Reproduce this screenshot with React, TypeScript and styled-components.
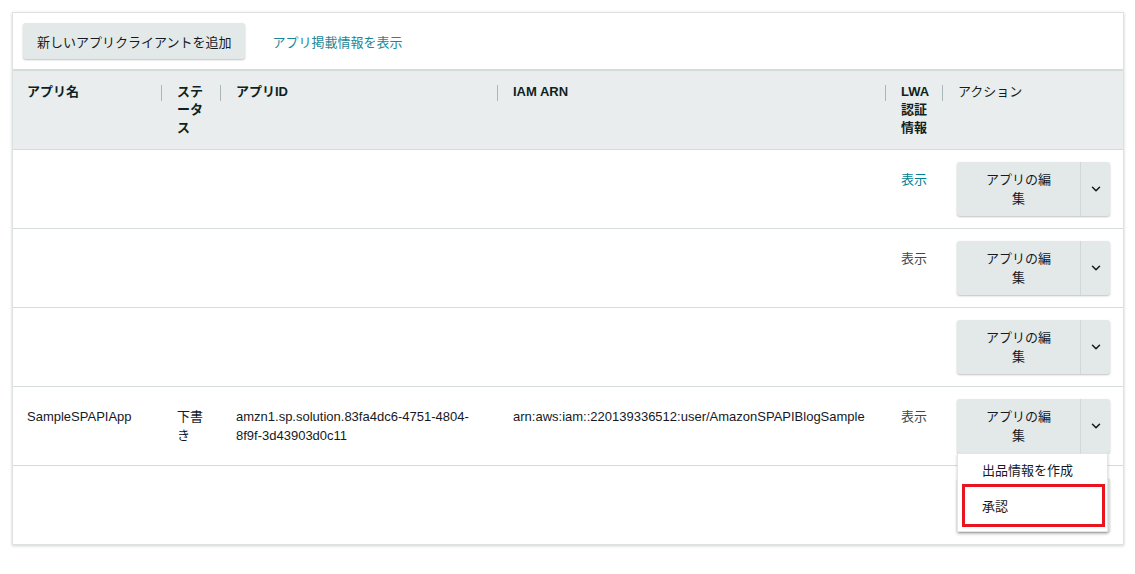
import { ChevronDown } from "lucide-react";
import styled, { createGlobalStyle } from "styled-components";

const GlobalStyle = createGlobalStyle`
  html, body {
    margin: 0;
    padding: 0;
    background: #ffffff;
  }
  body {
    font-family: "Liberation Sans", "Noto Sans CJK JP", sans-serif;
    font-size: 13px;
    color: #16191f;
  }
`;

const columns = "148px 59px 277px 388px 57px 1fr";

type AppRow = {
  name?: string;
  status?: string;
  appId?: string;
  arn?: string;
  showLink?: "link" | "plain" | "none";
  menuOpen?: boolean;
};

const rows: AppRow[] = [
  { showLink: "link" },
  { showLink: "plain" },
  { showLink: "none" },
  {
    name: "SampleSPAPIApp",
    status: "下書き",
    appId: "amzn1.sp.solution.83fa4dc6-4751-4804-8f9f-3d43903d0c11",
    arn: "arn:aws:iam::220139336512:user/AmazonSPAPIBlogSample",
    showLink: "plain",
    menuOpen: true,
  },
  { showLink: "none" },
];

const headers: { label: string; light?: boolean }[] = [
  { label: "アプリ名" },
  { label: "ステータス" },
  { label: "アプリID" },
  { label: "IAM ARN" },
  { label: "LWA認証情報" },
  { label: "アクション", light: true },
];

export default function App() {
  return (
    <>
      <GlobalStyle />
      <Page>
        <Card>
          <Toolbar>
            <PrimaryButton>新しいアプリクライアントを追加</PrimaryButton>
            <ToolbarLink>アプリ掲載情報を表示</ToolbarLink>
          </Toolbar>

          <HeaderRow>
            {headers.map((h, i) => (
              <HeaderCell key={h.label} $divider={i > 0} $light={h.light}>
                {h.label}
              </HeaderCell>
            ))}
          </HeaderRow>

          {rows.map((row, i) => (
            <BodyRow key={i} $last={i === rows.length - 1}>
              <Cell>{row.name}</Cell>
              <Cell>{row.status}</Cell>
              <Cell>{row.appId}</Cell>
              <Cell>{row.arn}</Cell>
              <Cell>
                {row.showLink !== "none" && (
                  <ShowLink $teal={row.showLink === "link"}>表示</ShowLink>
                )}
              </Cell>
              <ActionCell>
                <SplitButton>
                  <SplitMain>アプリの編集</SplitMain>
                  <SplitCaret>
                    <ChevronDown size={14} strokeWidth={2.6} />
                  </SplitCaret>
                  {row.menuOpen && (
                    <Menu>
                      <MenuItem>出品情報を作成</MenuItem>
                      <HighlightedItem>承認</HighlightedItem>
                    </Menu>
                  )}
                </SplitButton>
              </ActionCell>
            </BodyRow>
          ))}
        </Card>
      </Page>
    </>
  );
}

const Page = styled.div`
  padding: 12px 11px 12px 12px;
`;

const Card = styled.div`
  background: #ffffff;
  border: 1px solid #dde1e1;
  box-shadow: 0 1px 3px rgba(0, 0, 0, 0.18);
  box-sizing: border-box;
`;

const Toolbar = styled.div`
  display: flex;
  align-items: center;
  padding: 10px;
  border-bottom: 2px solid #d5dbdb;
`;

const PrimaryButton = styled.button`
  height: 36px;
  padding: 0 14px;
  border: none;
  border-radius: 3px;
  background: #e3e9e9;
  box-shadow: 0 1px 2px rgba(0, 0, 0, 0.25);
  font-family: inherit;
  font-size: 13px;
  color: #16191f;
  cursor: pointer;
`;

const ToolbarLink = styled.a`
  margin-left: 27px;
  color: #1a8799;
  cursor: pointer;
`;

const HeaderRow = styled.div`
  display: grid;
  grid-template-columns: ${columns};
  background: #e9eded;
  border-bottom: 1px solid #d5dbdb;
`;

const HeaderCell = styled.div<{ $divider?: boolean; $light?: boolean }>`
  position: relative;
  padding: 12px 14px 12px 16px;
  padding-left: ${({ $divider }) => ($divider ? "16px" : "14px")};
  line-height: 18px;
  font-weight: ${({ $light }) => ($light ? 400 : 700)};
  color: #0f1f22;

  &::before {
    content: "";
    display: ${({ $divider }) => ($divider ? "block" : "none")};
    position: absolute;
    left: 0;
    top: 14px;
    height: 16px;
    width: 1px;
    background: #aab7b8;
  }
`;

const BodyRow = styled.div<{ $last?: boolean }>`
  display: grid;
  grid-template-columns: ${columns};
  height: ${({ $last }) => ($last ? "78px" : "79px")};
  box-sizing: border-box;
  border-bottom: ${({ $last }) => ($last ? "none" : "1px solid #d5dbdb")};
`;

const Cell = styled.div`
  padding: 20px 14px 0 16px;
  &:first-child {
    padding-left: 14px;
  }
  line-height: 19px;
  color: #16191f;
`;

const ShowLink = styled.span<{ $teal?: boolean }>`
  color: ${({ $teal }) => ($teal ? "#007f94" : "#3a4a4c")};
  cursor: pointer;
`;

const ActionCell = styled.div`
  padding: 12px 0 0 15px;
`;

const SplitButton = styled.div`
  position: relative;
  display: flex;
  width: 153px;
  height: 54px;
  border-radius: 3px;
  background: #e3e9e9;
  box-shadow: 0 1px 2px rgba(0, 0, 0, 0.25);
`;

const SplitMain = styled.div`
  width: 124px;
  box-sizing: border-box;
  padding: 0 28px;
  display: flex;
  align-items: center;
  justify-content: center;
  text-align: center;
  line-height: 19px;
  border-right: 1px solid #d0d8d8;
  color: #16191f;
`;

const SplitCaret = styled.div`
  flex: 1;
  display: flex;
  align-items: center;
  justify-content: center;
  color: #16191f;
`;

const Menu = styled.div`
  position: absolute;
  top: 54px;
  left: 0;
  width: 151px;
  padding-bottom: 4px;
  background: #ffffff;
  border: 1px solid #e3e6e6;
  box-shadow: 0 2px 3px rgba(0, 0, 0, 0.2);
  z-index: 2;
  box-sizing: border-box;
`;

const MenuItem = styled.div`
  height: 30px;
  padding: 0 0 0 24px;
  display: flex;
  align-items: center;
  color: #16191f;
`;

const HighlightedItem = styled.div`
  margin: 0 2px 0 4px;
  height: 43px;
  box-sizing: border-box;
  border: 3px solid #e8141f;
  padding-left: 17px;
  display: flex;
  align-items: center;
  color: #16191f;
`;
